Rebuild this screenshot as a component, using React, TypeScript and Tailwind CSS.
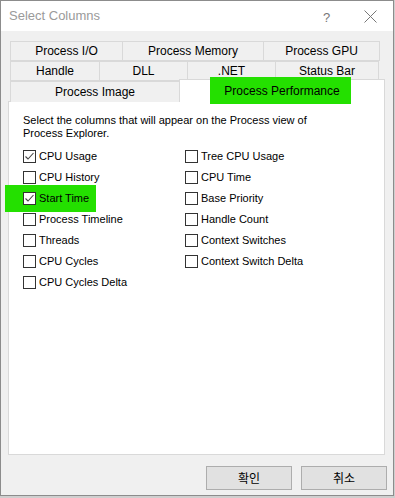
import React from 'react';

const font = { fontFamily: '"Liberation Sans", Arial, sans-serif' };

type Tab = { label: string; w: string };

const row1: Tab[] = [
  { label: 'Process I/O', w: 'w-[113px]' },
  { label: 'Process Memory', w: 'w-[142px]' },
  { label: 'Process GPU', w: 'w-[117px]' },
];
const row2: Tab[] = [
  { label: 'Handle', w: 'w-[90px]' },
  { label: 'DLL', w: 'w-[89px]' },
  { label: '.NET', w: 'w-[89px]' },
  { label: 'Status Bar', w: 'w-[104px]' },
];

const left = [
  { label: 'CPU Usage', checked: true },
  { label: 'CPU History' },
  { label: 'Start Time', checked: true, highlight: true },
  { label: 'Process Timeline' },
  { label: 'Threads' },
  { label: 'CPU Cycles' },
  { label: 'CPU Cycles Delta' },
];
const right = [
  { label: 'Tree CPU Usage' },
  { label: 'CPU Time' },
  { label: 'Base Priority' },
  { label: 'Handle Count' },
  { label: 'Context Switches' },
  { label: 'Context Switch Delta' },
];

function TabCell({ tab }: { tab: Tab }) {
  return (
    <div
      className={`${tab.w} h-[20px] flex items-center justify-center border border-[#d9d9d9] -ml-px first:ml-0 bg-[#f0f0f0] text-[12px] text-black`}
    >
      {tab.label}
    </div>
  );
}

function Check({ label, checked, highlight }: { label: string; checked?: boolean; highlight?: boolean }) {
  return (
    <div className="relative h-[21px] flex items-start">
      {highlight && <div className="absolute left-[-18px] top-[-7px] w-[91px] h-[27px] bg-[#24e000]" />}
      <div className="relative w-[13px] h-[13px] border border-[#333] bg-white flex items-center justify-center">
        {checked && (
          <svg width="11" height="11" viewBox="0 0 11 11">
            <path d="M1.5 5.5 L4 8 L9.5 2" fill="none" stroke="#444" strokeWidth="1.1" />
          </svg>
        )}
      </div>
      <span className="relative ml-[3px] text-[11px] leading-[13px] text-black whitespace-nowrap">{label}</span>
    </div>
  );
}

export default function App() {
  return (
    <div className="w-[395px] h-[498px] bg-[#cfcfcf]" style={font}>
      <div className="w-[394px] h-[496px] bg-[#f0f0f0] border border-[#8c8c8c] flex flex-col">
        {/* title bar */}
        <div className="h-[30px] bg-white flex items-center relative">
          <span className="ml-[8px] text-[13px] text-[#9a9a9a]">Select Columns</span>
          <span className="absolute left-[322px] top-[7px] text-[13px] text-[#777]">?</span>
          <svg className="absolute left-[363px] top-[9px]" width="13" height="13" viewBox="0 0 13 13">
            <path d="M0.5 0.5 L12.5 12.5 M12.5 0.5 L0.5 12.5" stroke="#777" strokeWidth="1" />
          </svg>
        </div>

        {/* tabs */}
        <div className="pl-[9px] pt-[10px] flex flex-col">
          <div className="flex">
            {row1.map((t) => (
              <TabCell key={t.label} tab={t} />
            ))}
          </div>
          <div className="flex">
            {row2.map((t) => (
              <TabCell key={t.label} tab={t} />
            ))}
          </div>
          <div className="flex relative z-10">
            <div className="w-[170px] h-[21px] flex items-center justify-center border border-[#d9d9d9] border-b-0 bg-[#f0f0f0] text-[12px] text-black">
              Process Image
            </div>
            <div className="relative w-[206px] h-[23px] -mt-[2px] -ml-px bg-white border border-[#d9d9d9] border-b-0 flex items-center justify-center text-[12px] text-black">
              <div className="absolute left-[30px] top-[-3px] w-[141px] h-[27px] bg-[#24e000]" />
              <span className="relative">Process Performance</span>
            </div>
          </div>
        </div>

        {/* panel */}
        <div className="ml-[7px] w-[377px] h-[354px] bg-white border border-[#d9d9d9] -mt-px pl-[14px] pt-[12px]">
          <p className="text-[11px] leading-[13px] text-black">
            Select the columns that will appear on the Process view of
            <br />
            Process Explorer.
          </p>
          <div className="mt-[10px] flex">
            <div className="w-[162px] flex flex-col">
              {left.map((c) => (
                <Check key={c.label} {...c} />
              ))}
            </div>
            <div className="flex flex-col">
              {right.map((c) => (
                <Check key={c.label} {...c} />
              ))}
            </div>
          </div>
        </div>

        {/* buttons */}
        <div className="flex justify-end gap-[9px] pr-[6px] mt-[11px]">
          {['확인', '취소'].map((b) => (
            <div
              key={b}
              className="w-[86px] h-[24px] bg-[#e1e1e1] border border-[#adadad] flex items-center justify-center text-[12px] text-black"
              style={{ fontFamily: '"Noto Sans CJK KR", sans-serif' }}
            >
              {b}
            </div>
          ))}
        </div>
      </div>
    </div>
  );
}
